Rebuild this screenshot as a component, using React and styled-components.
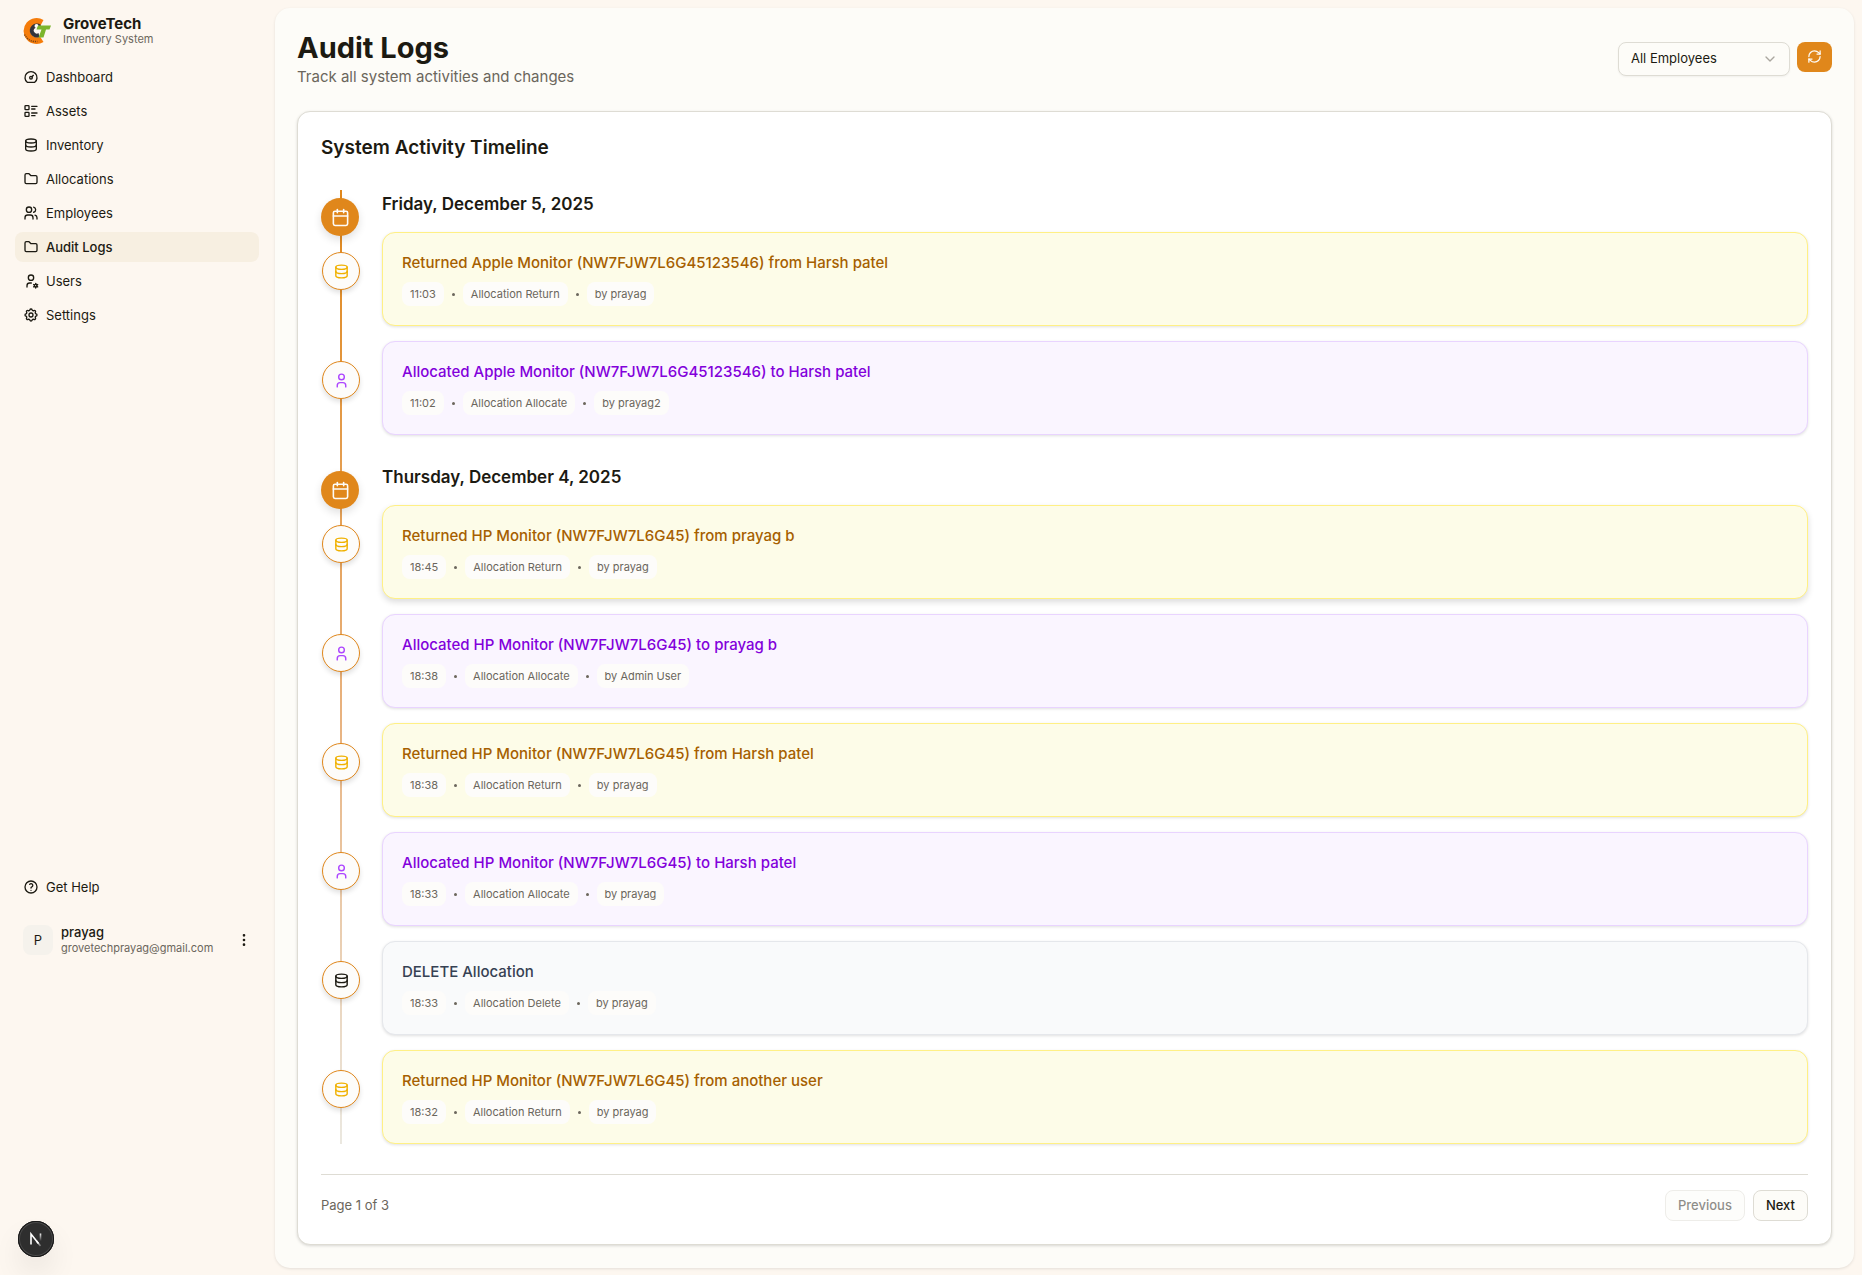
import React from "react";
import styled, { createGlobalStyle, css } from "styled-components";
import { Calendar, RefreshCw } from "lucide-react";
import {
  TbChevronDown,
  TbDashboard,
  TbDatabase,
  TbDotsVertical,
  TbFolder,
  TbHelp,
  TbListDetails,
  TbSettings,
  TbUser,
  TbUserCog,
  TbUsers,
} from "react-icons/tb";

const navItems = [
  { label: "Dashboard", icon: TbDashboard },
  { label: "Assets", icon: TbListDetails },
  { label: "Inventory", icon: TbDatabase },
  { label: "Allocations", icon: TbFolder },
  { label: "Employees", icon: TbUsers },
  { label: "Audit Logs", icon: TbFolder, active: true },
  { label: "Users", icon: TbUserCog },
  { label: "Settings", icon: TbSettings },
];

const days = [
  {
    date: "Friday, December 5, 2025",
    logs: [
      { type: "return", title: "Returned Apple Monitor (NW7FJW7L6G45123546) from Harsh patel", time: "11:03", action: "Allocation Return", by: "prayag" },
      { type: "allocate", title: "Allocated Apple Monitor (NW7FJW7L6G45123546) to Harsh patel", time: "11:02", action: "Allocation Allocate", by: "prayag2" },
    ],
  },
  {
    date: "Thursday, December 4, 2025",
    logs: [
      { type: "return", title: "Returned HP Monitor (NW7FJW7L6G45) from prayag b", time: "18:45", action: "Allocation Return", by: "prayag", raised: true },
      { type: "allocate", title: "Allocated HP Monitor (NW7FJW7L6G45) to prayag b", time: "18:38", action: "Allocation Allocate", by: "Admin User" },
      { type: "return", title: "Returned HP Monitor (NW7FJW7L6G45) from Harsh patel", time: "18:38", action: "Allocation Return", by: "prayag" },
      { type: "allocate", title: "Allocated HP Monitor (NW7FJW7L6G45) to Harsh patel", time: "18:33", action: "Allocation Allocate", by: "prayag" },
      { type: "delete", title: "DELETE Allocation", time: "18:33", action: "Allocation Delete", by: "prayag" },
      { type: "return", title: "Returned HP Monitor (NW7FJW7L6G45) from another user", time: "18:32", action: "Allocation Return", by: "prayag" },
    ],
  },
];

const tones = {
  return: { icon: TbDatabase, iconColor: "#f0b100", text: "#a65f00", bg: "#fdfce8", border: "#fff085" },
  allocate: { icon: TbUser, iconColor: "#ad46ff", text: "#8200db", bg: "#faf5ff", border: "#e9d4ff" },
  delete: { icon: TbDatabase, iconColor: "#1c1a12", text: "#364153", bg: "#f9fafb", border: "#e5e7eb" },
};

function Logo() {
  return (
    <svg width="30" height="30" viewBox="0 0 30 30" aria-hidden="true">
      <path d="M22.500 4A13 13 0 1 0 22.500 26L19 20.500A6.500 6.500 0 1 1 19.500 9.500Z" fill="#f57c0a" />
      <path d="M20 9A7 7 0 1 0 18.500 21L17.500 17A3 3 0 1 1 18 12.500Z" fill="#33333a" />
      <circle cx="15.500" cy="10" r="2" fill="#fff" />
      <path d="M17 9.500H30L28.500 13.500H25L22.500 21.500H17.500L20.500 13.500H15.500Z" fill="#7cb52c" />
      <path d="M3.500 18.500Q8 26.500 16.500 25.500" fill="none" stroke="#7a4416" strokeWidth="1.500" strokeDasharray="1.200 1" />
    </svg>
  );
}

function NextMark() {
  return (
    <svg width="36" height="36" viewBox="0 0 36 36" fill="none" aria-hidden="true">
      <defs>
        <linearGradient id="markLeg" x1="20" y1="19" x2="24" y2="25" gradientUnits="userSpaceOnUse">
          <stop stopColor="#fff" />
          <stop offset="1" stopColor="#fff" stopOpacity="0.2" />
        </linearGradient>
        <linearGradient id="markBar" x1="22" y1="12" x2="22" y2="20" gradientUnits="userSpaceOnUse">
          <stop stopColor="#fff" />
          <stop offset="1" stopColor="#fff" stopOpacity="0" />
        </linearGradient>
      </defs>
      <path d="M13 23.500V13L20.500 22.500" stroke="#fff" strokeWidth="1.600" />
      <path d="M18.500 20L22.500 25" stroke="url(#markLeg)" strokeWidth="1.600" />
      <path d="M22.500 12.500V20" stroke="url(#markBar)" strokeWidth="1.600" />
    </svg>
  );
}

function LogEntry({ log }) {
  const tone = tones[log.type];
  const Icon = tone.icon;
  return (
    <Entry>
      <Rail>
        <EntryMarker $color={tone.iconColor}>
          <Icon size={17} />
        </EntryMarker>
      </Rail>
      <EntryCard $tone={tone} $raised={log.raised}>
        <EntryTitle $color={tone.text}>{log.title}</EntryTitle>
        <Meta>
          <Pill>{log.time}</Pill>
          <Dot />
          <Pill>{log.action}</Pill>
          <Dot />
          <Pill>by {log.by}</Pill>
        </Meta>
      </EntryCard>
    </Entry>
  );
}

export default function App() {
  return (
    <Layout>
      <GlobalStyle />
      <Sidebar>
        <Brand href="#">
          <Logo />
          <div>
            <BrandName>GroveTech</BrandName>
            <SmallText>Inventory System</SmallText>
          </div>
        </Brand>
        <Nav>
          {navItems.map(({ label, icon: Icon, active }) => (
            <NavLink key={label} href="#" $active={active}>
              <Icon size={16} />
              {label}
            </NavLink>
          ))}
        </Nav>
        <HelpNav>
          <NavLink href="#">
            <TbHelp size={16} />
            Get Help
          </NavLink>
        </HelpNav>
        <UserButton type="button">
          <Avatar>P</Avatar>
          <UserInfo>
            <UserName>prayag</UserName>
            <SmallText>grovetechprayag@gmail.com</SmallText>
          </UserInfo>
          <TbDotsVertical size={16} />
        </UserButton>
      </Sidebar>

      <Main>
        <Header>
          <div>
            <PageTitle>Audit Logs</PageTitle>
            <Subtitle>Track all system activities and changes</Subtitle>
          </div>
          <Actions>
            <SelectWrap>
              <Select aria-label="Employee" defaultValue="all">
                <option value="all">All Employees</option>
              </Select>
              <TbChevronDown size={16} />
            </SelectWrap>
            <RefreshButton type="button" aria-label="Refresh">
              <RefreshCw size={15} />
            </RefreshButton>
          </Actions>
        </Header>

        <Card>
          <CardTitle>System Activity Timeline</CardTitle>
          <Timeline>
            {days.map((day) => (
              <Day key={day.date}>
                <DayHeader>
                  <Rail>
                    <DayMarker>
                      <Calendar size={19} />
                    </DayMarker>
                  </Rail>
                  <DayTitle>{day.date}</DayTitle>
                </DayHeader>
                <Entries>
                  {day.logs.map((log) => (
                    <LogEntry key={log.time + log.title} log={log} />
                  ))}
                </Entries>
              </Day>
            ))}
          </Timeline>
          <Pagination>
            <PageInfo>Page 1 of 3</PageInfo>
            <PageButton type="button" disabled>Previous</PageButton>
            <PageButton type="button">Next</PageButton>
          </Pagination>
        </Card>
      </Main>

      <DevBadge type="button" aria-label="Open dev tools">
        <NextMark />
      </DevBadge>
    </Layout>
  );
}

const GlobalStyle = createGlobalStyle`
  *, *::before, *::after {
    box-sizing: border-box;
  }
  body {
    margin: 0;
    background: #fdf7f0;
    color: #1c1a12;
    font-family: Inter, "Liberation Sans", sans-serif;
    font-size: 13px;
    line-height: 19px;
  }
  h1, h2, h3, h4, p {
    margin: 0;
  }
  button, select {
    font: inherit;
    color: inherit;
  }
`;

const Layout = styled.div`
  display: flex;
  min-height: 100vh;
`;

const Sidebar = styled.aside`
  width: 275px;
  height: 76vh;
  flex-shrink: 0;
  display: flex;
  flex-direction: column;
  padding: 15px 16px 6px 15px;
`;

const Brand = styled.a`
  display: flex;
  align-items: center;
  gap: 12px;
  padding: 0 6px;
  color: inherit;
  text-decoration: none;
`;

const BrandName = styled.div`
  font-size: 15px;
  font-weight: 700;
  line-height: 17px;
`;

const SmallText = styled.div`
  font-size: 11px;
  line-height: 15px;
  color: #6b665c;
`;

const Nav = styled.nav`
  display: flex;
  flex-direction: column;
  gap: 4px;
  padding-top: 15px;
`;

const HelpNav = styled(Nav)`
  margin-top: auto;
`;

const NavLink = styled.a`
  display: flex;
  align-items: center;
  gap: 7px;
  height: 30px;
  padding: 0 8px;
  border-radius: 8px;
  color: inherit;
  text-decoration: none;
  ${(props) =>
    props.$active &&
    css`
      background: #f7efe1;
      font-weight: 500;
    `}
`;

const UserButton = styled.button`
  display: flex;
  align-items: center;
  gap: 8px;
  margin-top: 15px;
  padding: 7px;
  padding-left: 8px;
  border: 0;
  background: none;
  text-align: left;
  cursor: pointer;
`;

const Avatar = styled.span`
  display: flex;
  align-items: center;
  justify-content: center;
  width: 30px;
  height: 30px;
  border-radius: 8px;
  background: #f5f2ec;
`;

const UserInfo = styled.div`
  flex: 1;
`;

const UserName = styled.div`
  font-weight: 500;
  line-height: 17px;
`;

const Main = styled.main`
  flex: 1;
  min-width: 0;
  margin: 8px 8px 7px 0;
  padding: 22px;
  border-radius: 15px;
  background: #fdfcf8;
  box-shadow: 0 1px 3px rgba(0, 0, 0, 0.1);
`;

const Header = styled.header`
  display: flex;
  justify-content: space-between;
  align-items: center;
  margin-bottom: 24px;
`;

const PageTitle = styled.h1`
  font-size: 29px;
  font-weight: 700;
  line-height: 36px;
`;

const Subtitle = styled.p`
  font-size: 15px;
  line-height: 21px;
  color: #6b665c;
`;

const Actions = styled.div`
  display: flex;
  align-items: flex-start;
  gap: 7px;
`;

const SelectWrap = styled.div`
  display: grid;
  align-items: center;
  width: 172px;

  > * {
    grid-area: 1 / 1;
  }
  svg {
    justify-self: end;
    margin-right: 12px;
    color: #aaa79f;
    pointer-events: none;
  }
`;

const Select = styled.select`
  appearance: none;
  height: 34px;
  padding: 0 12px;
  border: 1px solid #dedcd4;
  border-radius: 8px;
  background: #fdfcf8;
  box-shadow: 0 1px 2px rgba(0, 0, 0, 0.05);
`;

const RefreshButton = styled.button`
  display: flex;
  align-items: center;
  justify-content: center;
  width: 35px;
  height: 30px;
  padding: 0;
  border: 0;
  border-radius: 8px;
  background: #e0871b;
  color: #fdfcf8;
  cursor: pointer;
`;

const Card = styled.section`
  padding: 24px 23px 23px;
  border: 1px solid #dedcd4;
  border-radius: 13px;
  background: #fff;
  box-shadow: 0 1px 3px rgba(0, 0, 0, 0.15);
`;

const CardTitle = styled.h2`
  font-size: 19px;
  font-weight: 600;
  line-height: 24px;
  margin-bottom: 30px;
`;

const Timeline = styled.div`
  display: flex;
  flex-direction: column;
  gap: 28px;
  background: linear-gradient(to bottom, #e0871b, #e8b27f 55%, #ebe8e0) 19px 0 / 2px 100% no-repeat;
`;

const Day = styled.section`
  display: flex;
  flex-direction: column;
  gap: 14px;
`;

const DayHeader = styled.div`
  display: flex;
  gap: 21px;
  height: 28px;
`;

const Rail = styled.div`
  display: flex;
  flex-shrink: 0;
  justify-content: center;
  align-items: flex-start;
  width: 40px;
`;

const Marker = styled.div`
  display: flex;
  flex-shrink: 0;
  align-items: center;
  justify-content: center;
  width: 38px;
  height: 38px;
  border-radius: 50%;
`;

const DayMarker = styled(Marker)`
  margin-top: 8px;
  margin-right: auto;
  background: #e0871b;
  color: #fdfcf8;
  box-shadow: 0 4px 8px rgba(0, 0, 0, 0.12);
`;

const EntryMarker = styled(Marker)`
  margin-top: 20px;
  border: 1px solid #e0871b;
  background: #fdfcfa;
  color: ${(props) => props.$color};
  box-shadow: 0 3px 5px rgba(0, 0, 0, 0.12);
`;

const DayTitle = styled.h3`
  font-size: 17px;
  font-weight: 600;
  line-height: 28px;
`;

const Entries = styled.div`
  display: flex;
  flex-direction: column;
  gap: 15px;
`;

const Entry = styled.article`
  display: flex;
  gap: 21px;
`;

const EntryCard = styled.div`
  flex: 1;
  min-width: 0;
  padding: 19px;
  border: 1px solid ${(props) => props.$tone.border};
  border-radius: 13px;
  background: ${(props) => props.$tone.bg};
  box-shadow: ${(props) => (props.$raised ? "0 3px 6px rgba(0, 0, 0, 0.14)" : "0 1px 3px rgba(0, 0, 0, 0.12)")};
`;

const EntryTitle = styled.h4`
  font-size: 15px;
  font-weight: 500;
  line-height: 22px;
  color: ${(props) => props.$color};
`;

const Meta = styled.div`
  display: flex;
  align-items: center;
  gap: 8px;
  margin-top: 8px;
  font-size: 11px;
  line-height: 16px;
  color: #6b665c;
`;

const Dot = styled.span`
  width: 3px;
  height: 3px;
  border-radius: 50%;
  background: #6b665c;
`;

const Pill = styled.span`
  padding: 4px 8px;
  border-radius: 8px;
  background: #fdfcfa;
`;

const Pagination = styled.footer`
  display: flex;
  align-items: center;
  gap: 8px;
  margin-top: 30px;
  padding-top: 15px;
  border-top: 1px solid #dedcd4;
`;

const PageInfo = styled.p`
  margin-right: auto;
  color: #6b665c;
`;

const PageButton = styled.button`
  height: 31px;
  padding: 0 12px;
  border: 1px solid #dedcd4;
  border-radius: 8px;
  background: #fdfcf8;
  font-weight: 500;
  cursor: pointer;

  &:disabled {
    opacity: 0.5;
    cursor: default;
  }
`;

const DevBadge = styled.button`
  position: fixed;
  left: 18px;
  bottom: 18px;
  width: 36px;
  height: 36px;
  padding: 0;
  border: 0;
  border-radius: 50%;
  background: #2e2e2e;
  box-shadow: inset 0 0 0 1px #171717, inset 0 0 0 2px #4a4a4a, 0 16px 32px -8px rgba(0, 0, 0, 0.24);
  cursor: pointer;
`;
